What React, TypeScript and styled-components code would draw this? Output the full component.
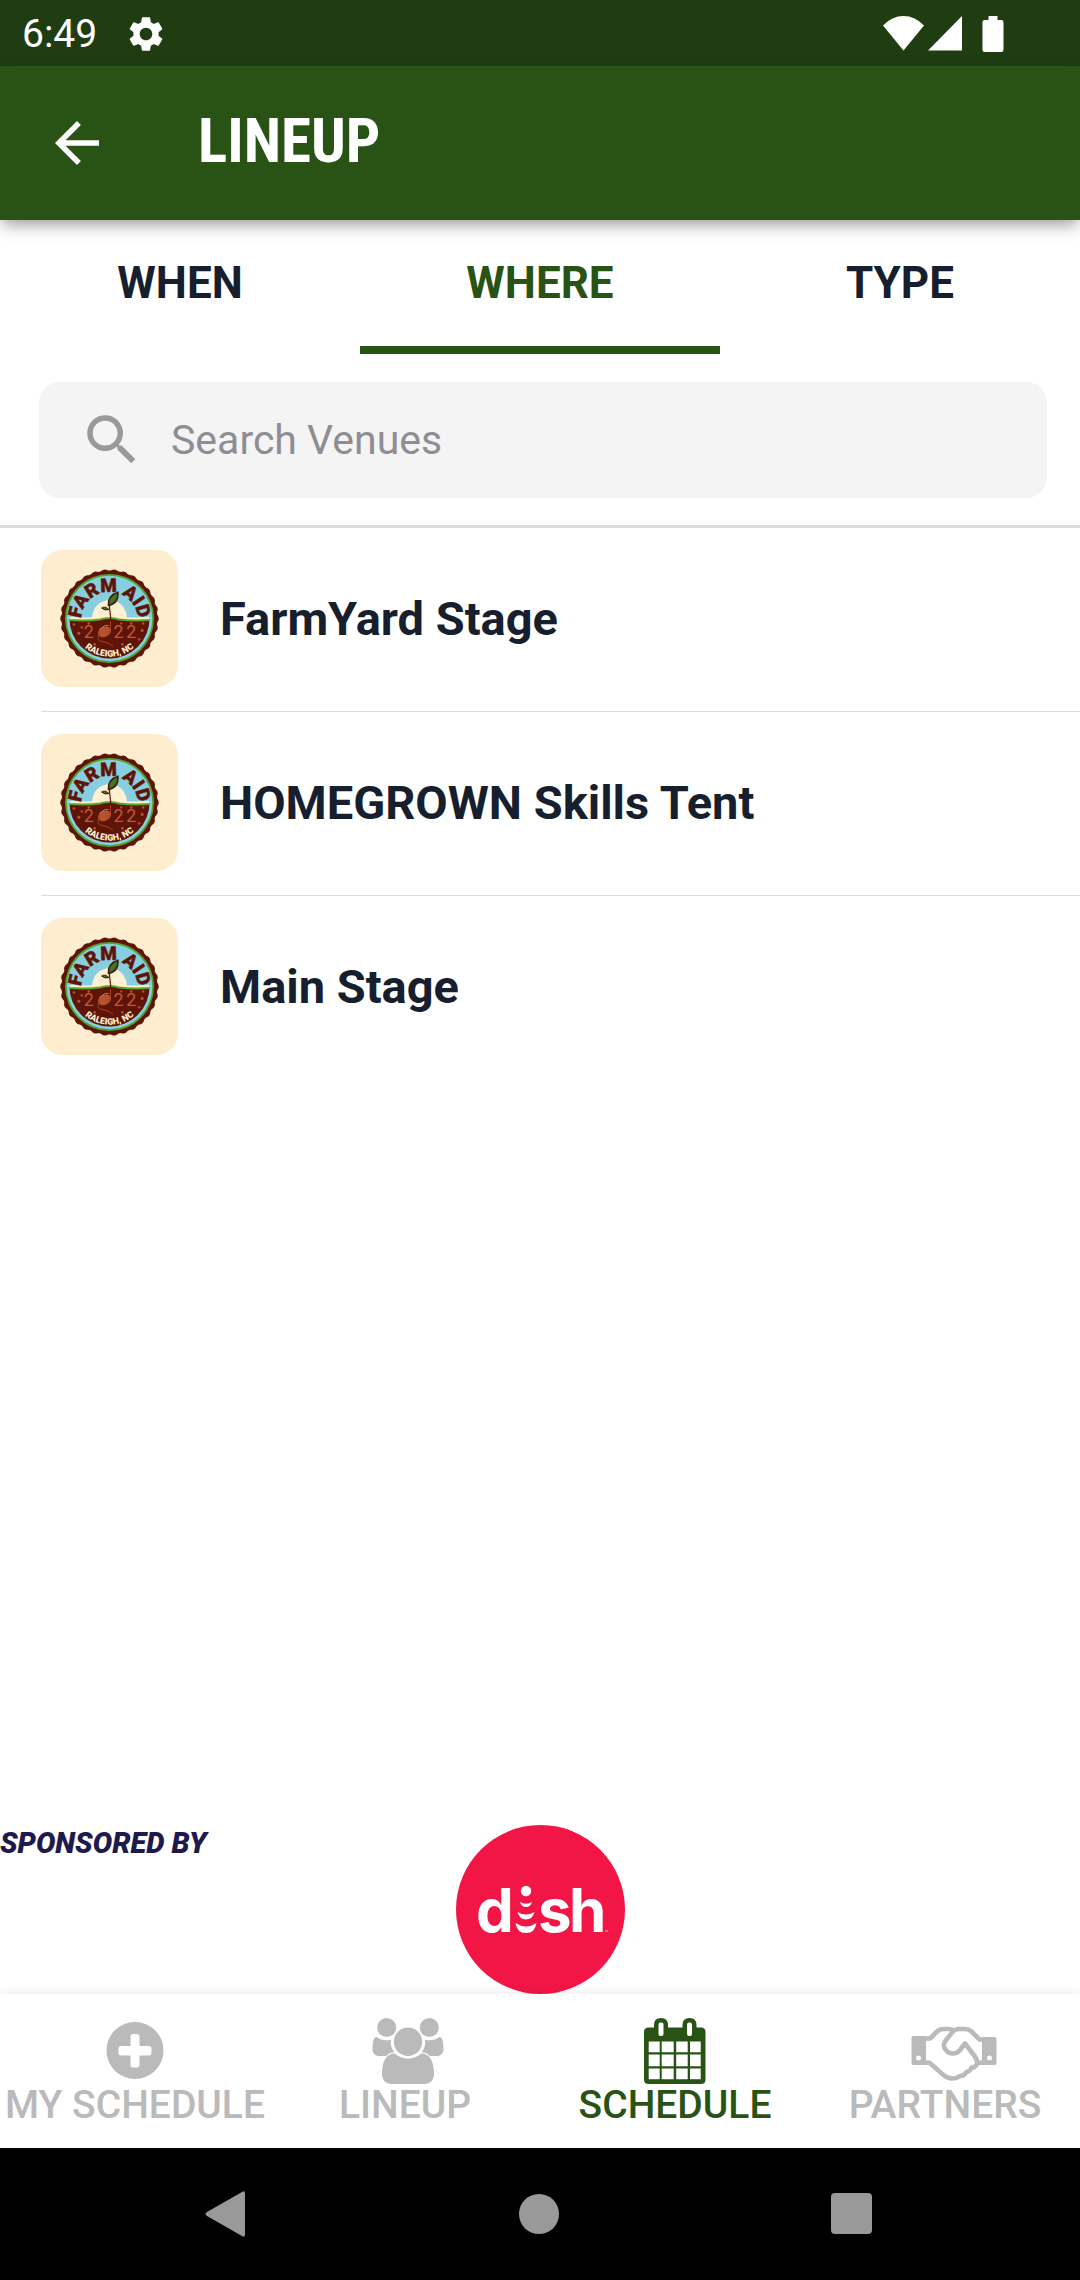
import React, { useState } from 'react';
import styled, { createGlobalStyle } from 'styled-components';
import { MdArrowBack, MdSearch, MdSettings } from 'react-icons/md';

const color = {
  statusBar: '#1f3d11',
  brand: '#295314',
  ink: '#171e2d',
  muted: '#bababa',
  placeholder: '#8e8d93',
  tile: '#ffedd0',
  rule: '#dcdcdc',
};

const GlobalStyle = createGlobalStyle`
  *, *::before, *::after { box-sizing: border-box; }
  body {
    margin: 0;
    background: #fff;
    font-family: Roboto, "Liberation Sans", sans-serif;
  }
  button { font: inherit; border: 0; padding: 0; background: none; cursor: pointer; }
  a { text-decoration: none; color: inherit; }
  svg { display: block; flex: none; }
`;

const Screen = styled.div`
  min-height: 100vh;
  display: flex;
  flex-direction: column;
`;

const StatusBar = styled.div`
  display: flex;
  align-items: center;
  justify-content: space-between;
  height: 66px;
  padding: 2px 75px 0 22px;
  background: ${color.statusBar};
  color: #fff;
  font-size: 39px;
`;

const StatusGroup = styled.div<{ $gap: number }>`
  display: flex;
  align-items: center;
  gap: ${(p) => p.$gap}px;
`;

const AppBar = styled.header`
  display: flex;
  align-items: center;
  gap: 88px;
  height: 154px;
  padding: 0 44px;
  background: ${color.brand};
  color: #fff;
  box-shadow: 0 6px 16px -2px rgba(0, 0, 0, 0.42);
`;

const BackButton = styled.button`
  color: #fff;
`;

const Title = styled.h1`
  margin: 0;
  padding-bottom: 4px;
  font-family: "Roboto Condensed", "Liberation Sans Narrow", Roboto, sans-serif;
  font-size: 61px;
  line-height: 72px;
  font-weight: 700;
`;

const Tabs = styled.div`
  display: grid;
  grid-template-columns: repeat(3, 1fr);
`;

const Tab = styled.button<{ $active: boolean }>`
  && {
    height: 134px;
    border-bottom: 8px solid ${(p) => (p.$active ? color.brand : 'transparent')};
    color: ${(p) => (p.$active ? color.brand : color.ink)};
    font-size: 44px;
    font-weight: 700;
  }
`;

const SearchArea = styled.div`
  padding: 28px 33px 27px 39px;
  border-bottom: 3px solid ${color.rule};
`;

const SearchBox = styled.label`
  display: flex;
  align-items: center;
  gap: 26px;
  height: 116px;
  padding: 0 40px;
  border-radius: 21px;
  background: #f4f4f4;
  color: #999;
`;

const SearchInput = styled.input`
  flex: 1;
  min-width: 0;
  border: 0;
  outline: 0;
  padding: 0;
  background: none;
  font: 41px Roboto, sans-serif;
  color: ${color.ink};
  &::placeholder { color: ${color.placeholder}; opacity: 1; }
`;

const VenueList = styled.ul`
  flex: 1;
  margin: 0;
  padding: 0 0 0 41px;
  list-style: none;
`;

const VenueItem = styled.li`
  & + & { border-top: 1px solid ${color.rule}; }
`;

const VenueLink = styled.a`
  display: flex;
  align-items: center;
  gap: 42px;
  padding: 22px 0 24px;
  font-size: 47px;
  font-weight: 700;
  && { color: ${color.ink}; }
`;

const Tile = styled.span`
  display: grid;
  place-items: center;
  width: 137px;
  height: 137px;
  border-radius: 21px;
  background: ${color.tile};
`;

const Sponsor = styled.aside`
  display: grid;
  grid-template-columns: 1fr auto 1fr;
  align-items: start;
`;

const SponsorLabel = styled.span`
  padding-top: 1px;
  color: #1f1a4d;
  font-size: 29px;
  line-height: 34px;
  font-style: italic;
  font-weight: 900;
`;

const BottomNav = styled.nav`
  display: grid;
  grid-template-columns: repeat(4, 1fr);
  height: 154px;
  background: #fff;
  box-shadow: 0 0 10px rgba(0, 0, 0, 0.1);
`;

const NavItem = styled.a<{ $active: boolean }>`
  display: flex;
  flex-direction: column;
  align-items: center;
  padding-top: 24px;
  white-space: nowrap;
  && { color: ${(p) => (p.$active ? color.brand : color.muted)}; }
  font-size: 39px;
  line-height: 43px;
  font-weight: 500;
`;

const SystemNav = styled.div`
  display: flex;
  align-items: center;
  justify-content: space-around;
  height: 132px;
  padding: 0 70px;
  background: #000;
`;

const SystemButton = styled.button`
  color: #999;
`;

const SHEET = { width: 90, height: 66, viewBox: '0 0 90 66', fill: 'currentColor', 'aria-hidden': true } as const;

const PlusCircleIcon = () => (
  <svg {...SHEET}>
    <path
      fillRule="evenodd"
      d="M45 4a28.500 28.500 0 1 1 0 57a28.500 28.500 0 1 1 0-57zM43 16q-2.500 0-2.500 2.500V28h-9.500q-2.500 0-2.500 2.500v4.500q0 2.500 2.500 2.500h9.500v9.500q0 2.500 2.500 2.500h4q2.500 0 2.500-2.500v-9.500h9.500q2.500 0 2.500-2.500v-4.500q0-2.500-2.500-2.500h-9.500v-9.500q0-2.500-2.500-2.500z"
    />
  </svg>
);

const PeopleIcon = () => (
  <svg {...SHEET} viewBox="-3 0 90 66">
    <circle cx="23.700" cy="9.500" r="9.500" />
    <circle cx="66.300" cy="9.500" r="9.500" />
    <circle cx="45" cy="23.700" r="14.200" />
    <path d="M13.500 19c-3 0-4 6-4 12.500 0 4 3 6.500 7 6.500h6.800c2-2.200 4.500-3.500 8-3.700-3-4-4-8-3.300-12.500-5.500 1.300-10 0-14.500-2.800z" />
    <path d="M76.500 19c3 0 4 6 4 12.500 0 4-3 6.500-7 6.500h-6.800c-2-2.200-4.500-3.500-8-3.700 3-4 4-8 3.300-12.500 5.500 1.300 10 0 14.500-2.800z" />
    <path d="M31.500 35.500c4 3.200 8.500 5.200 13.500 5.200s9.500-2 13.500-5.200c8 0 12.500 7.500 12.500 20.500 0 6.500-4 10-10 10H29c-6 0-10-3.500-10-10 0-13 4.500-20.500 12.500-20.500z" />
  </svg>
);

const CalendarIcon = () => (
  <svg {...SHEET}>
    <path
      fillRule="evenodd"
      d="M18.500 9.500H24V7q0-7 7-7t7 7v2.500h14.500V7q0-7 7-7t7 7v2.500H71q4.500 0 4.500 4.500v47.500q0 4.500-4.500 4.500H18.500q-4.500 0-4.500-4.500V14q0-4.500 4.500-4.500zM30.500 4.500q-2 0-2 2v9.500q0 2 2 2h1q2 0 2-2V6.500q0-2-2-2zM59 4.500q-2 0-2 2v9.500q0 2 2 2h1q2 0 2-2V6.500q0-2-2-2zM18.700 23.500v10.700h11V23.500zM31.700 23.500v10.700h12V23.500zM46.200 23.500v10.700h11.500V23.500zM60 23.500v10.700h10.700V23.500zM18.700 36.500v11.700h11V36.500zM31.700 36.500v11.700h12V36.500zM46.200 36.500v11.700h11.500V36.500zM60 36.500v11.700h10.700V36.500zM18.700 50.500v10.700h11V50.500zM31.700 50.500v10.700h12V50.500zM46.200 50.500v10.700h11.500V50.500zM60 50.500v10.700h10.700V50.500z"
    />
  </svg>
);

const HandshakeIcon = () => (
  <svg {...SHEET} width={108} viewBox="-18 0 108 66">
    <path
      fillRule="evenodd"
      d="M4.500 18H17v29H4.500q-2 0-2-2V20q0-2 2-2zM9.500 37.500a2.500 2.500 0 1 0 0 5a2.500 2.500 0 1 0 0-5z"
    />
    <path
      fillRule="evenodd"
      d="M73 19h12.500q2 0 2 2v24q0 2-2 2H73zM80.500 37.500a2.500 2.500 0 1 0 0 5a2.500 2.500 0 1 0 0-5z"
    />
    <g fill="none" stroke="currentColor" strokeWidth="4.600" strokeLinejoin="round">
      <path d="M16 20.500h5l6.500-6.500q3-3 7-3h5q3 0 5 1.500" />
      <path d="M74 21.500h-3.500l-8-8q-3-2.500-6.500-2.500h-6q-4 0-6.500 3L37 22q-3.500 4.500-1 9 3 4.500 8 4.500 4 0 7-3.500l5-6.500 9.500 12.500q4 5.500 2 9-1.500 2.500-5 2.500-1 4-5 4.500-2 4-6.500 4-3 2.500-8 2.500-4.500 0-8.500-3.500L20.500 44.700H16" />
      <path d="M68 44.700h6" />
    </g>
  </svg>
);

const scallops = Array.from({ length: 30 }, (_, i) => {
  const a = (i / 30) * Math.PI * 2;
  return { x: 50 + 44.5 * Math.cos(a), y: 50 + 44.5 * Math.sin(a) };
});

const FestivalBadge = ({ id }: { id: string }) => (
  <svg width="99" height="99" viewBox="0 0 100 100" role="img" aria-label="Farm Aid 2022, Raleigh, NC">
    <defs>
      <path id={`${id}-top`} d="M21.200 52a28.800 28.800 0 1 1 57.600 0" />
      <path id={`${id}-bottom`} d="M11.500 50a38.500 38.500 0 0 0 77 0" />
      <clipPath id={`${id}-disc`}>
        <circle cx="50" cy="50" r="40.500" />
      </clipPath>
    </defs>
    {scallops.map((s, i) => (
      <circle key={i} cx={s.x} cy={s.y} r="5.200" fill="#5f1408" />
    ))}
    <circle cx="50" cy="50" r="48.400" fill="#5f1408" />
    <circle cx="50" cy="50" r="45" fill="#4fa32d" />
    <circle cx="50" cy="50" r="43.200" fill="#87cfe0" />
    <g clipPath={`url(#${id}-disc)`}>
      <circle cx="50" cy="49" r="17.500" fill="#fff0d2" />
      <path d="M0 49q26 2 40 0 10-3 20 0 14 2 40 0v60H0z" fill="#5f1408" />
      <path d="M0 49.500q26 2 40 0 10-3 20 0 14 2 40 0" fill="none" stroke="#fff0d2" strokeWidth="3" />
      <path d="M0 51q26 2 40 0 10-3 20 0 14 2 40 0" fill="none" stroke="#5fa52c" strokeWidth="2" />
    </g>
    <text
      fill="#5f1408"
      stroke="#5f1408"
      strokeWidth="0.500"
      fontFamily="Roboto, sans-serif"
      fontWeight="900"
      fontSize="19"
      textAnchor="middle"
    >
      <textPath href={`#${id}-top`} startOffset="50%">FARM AID</textPath>
    </text>
    <path d="M51 60q1-10-1-21 0-6 3-9" fill="none" stroke="#5f1408" strokeWidth="1.200" />
    <path d="M49 37q-1-10 9.500-13.500 1 11-9.500 13.500z" fill="#3f7421" stroke="#4a1208" strokeWidth="1.500" />
    <path d="M49.500 41q-4-4-7.500-1.500 3.500 3 7.500 1.500z" fill="#3f7421" stroke="#4a1208" />
    <ellipse cx="45" cy="63.500" rx="7" ry="5" transform="rotate(-28 45 63.500)" fill="#b4522e" />
    <path d="M40 61q5-5 9-4" fill="none" stroke="#e6a079" strokeWidth="0.800" />
    <path d="M51 53v6q0 5-4 8M39.500 66q-3 5 2 7 8 1 12 5" fill="none" stroke="#a3421f" />
    <g fill="#b4522e">
      <circle cx="14" cy="56" r="1.300" />
      <circle cx="22" cy="59" r="1.200" />
      <circle cx="19" cy="65" r="1.600" />
      <circle cx="29" cy="55" r="1.200" />
      <circle cx="35" cy="76" r="1.300" />
      <circle cx="63" cy="76" r="1.300" />
      <circle cx="62" cy="55" r="1.100" />
      <circle cx="72" cy="55" r="1.200" />
      <circle cx="83" cy="62" r="1.600" />
      <circle cx="84" cy="55" r="1.200" />
      <circle cx="80" cy="71" r="1.200" />
    </g>
    <g fill="#c05a34" fontFamily="Roboto, sans-serif" fontSize="18" fontWeight="400">
      <text x="24" y="70">2</text>
      <text x="54" y="70">2</text>
      <text x="67" y="70">2</text>
    </g>
    <text fill="#fff0d2" fontFamily="Roboto, sans-serif" fontWeight="900" fontSize="9" textAnchor="middle">
      <textPath href={`#${id}-bottom`} startOffset="50%">RALEIGH, NC</textPath>
    </text>
  </svg>
);

const DishLogo = () => (
  <svg width="169" height="169" viewBox="0 0 169 169" role="img" aria-label="dish">
    <circle cx="84.500" cy="84.500" r="84.500" fill="#f21646" />
    <g fill="#fff" fontFamily="Inter, sans-serif" fontWeight="700" fontSize="60">
      <text x="20" y="107">d</text>
      <text x="82" y="107">s</text>
      <text x="113" y="107">h</text>
    </g>
    <ellipse cx="70" cy="66" rx="5.200" ry="5.200" fill="#fff" />
    <path d="M64 77q6 3.500 12 0-1.500 5-6 5t-6-5zM61.500 87q8.500 5 17 0-2 7.500-8.500 7.500t-8.500-7.500zM59.500 98q10.500 7 21 0-1.500 10-10.500 10t-10.500-10z" fill="#fff" />
    <path d="M149 106h3" stroke="#fff" strokeWidth="1" opacity="0.700" />
  </svg>
);

const TABS = ['WHEN', 'WHERE', 'TYPE'];
const VENUES = ['FarmYard Stage', 'HOMEGROWN Skills Tent', 'Main Stage'];
const NAV = [
  { label: 'MY SCHEDULE', href: '#my-schedule', Icon: PlusCircleIcon },
  { label: 'LINEUP', href: '#lineup', Icon: PeopleIcon },
  { label: 'SCHEDULE', href: '#schedule', Icon: CalendarIcon },
  { label: 'PARTNERS', href: '#partners', Icon: HandshakeIcon },
];

export default function App() {
  const [tab, setTab] = useState('WHERE');
  const [query, setQuery] = useState('');
  const venues = VENUES.filter((v) => v.toLowerCase().includes(query.toLowerCase()));

  return (
    <Screen>
      <GlobalStyle />
      <StatusBar>
        <StatusGroup $gap={28}>
          <span>6:49</span>
          <MdSettings size={42} />
        </StatusGroup>
        <svg width="122" height="36" viewBox="0 0 122 36" fill="#fff" aria-hidden="true">
          <path d="M0 9.500Q9 0 20.500 0T41 9.500L20.500 34.500z" />
          <path d="M45 34.500 79 0v34.500z" />
          <path d="M105.500 0h9v4h4q2 0 2 2v28q0 2-2 2h-17q-2 0-2-2V6q0-2 2-2h4z" />
        </svg>
      </StatusBar>

      <AppBar>
        <BackButton type="button" aria-label="Back">
          <MdArrowBack size={66} />
        </BackButton>
        <Title>LINEUP</Title>
      </AppBar>

      <Tabs role="tablist">
        {TABS.map((name) => (
          <Tab
            key={name}
            type="button"
            role="tab"
            aria-selected={tab === name}
            $active={tab === name}
            onClick={() => setTab(name)}
          >
            {name}
          </Tab>
        ))}
      </Tabs>

      <SearchArea>
        <SearchBox>
          <MdSearch size={66} aria-hidden="true" />
          <SearchInput
            aria-label="Search Venues"
            placeholder="Search Venues"
            value={query}
            onChange={(e) => setQuery(e.target.value)}
          />
        </SearchBox>
      </SearchArea>

      <VenueList>
        {venues.map((venue) => {
          const slug = venue.toLowerCase().replace(/\s+/g, '-');
          return (
            <VenueItem key={venue}>
              <VenueLink href={`#${slug}`}>
                <Tile>
                  <FestivalBadge id={slug} />
                </Tile>
                {venue}
              </VenueLink>
            </VenueItem>
          );
        })}
      </VenueList>

      <Sponsor>
        <SponsorLabel>SPONSORED BY</SponsorLabel>
        <DishLogo />
      </Sponsor>

      <BottomNav>
        {NAV.map(({ label, href, Icon }) => (
          <NavItem key={label} href={href} $active={label === 'SCHEDULE'}>
            <Icon />
            {label}
          </NavItem>
        ))}
      </BottomNav>

      <SystemNav>
        <SystemButton type="button" aria-label="System back">
          <svg width="42" height="46" viewBox="0 0 42 46" fill="currentColor">
            <path d="M37 1q3-2 3 2v40q0 4-3 2L2 25q-3-2 0-4z" />
          </svg>
        </SystemButton>
        <SystemButton type="button" aria-label="Home">
          <svg width="42" height="46" viewBox="0 0 42 46" fill="currentColor">
            <circle cx="21" cy="23" r="20" />
          </svg>
        </SystemButton>
        <SystemButton type="button" aria-label="Recent apps">
          <svg width="44" height="46" viewBox="0 0 44 46" fill="currentColor">
            <rect x="0" y="2" width="41" height="41" rx="4" />
          </svg>
        </SystemButton>
      </SystemNav>
    </Screen>
  );
}
